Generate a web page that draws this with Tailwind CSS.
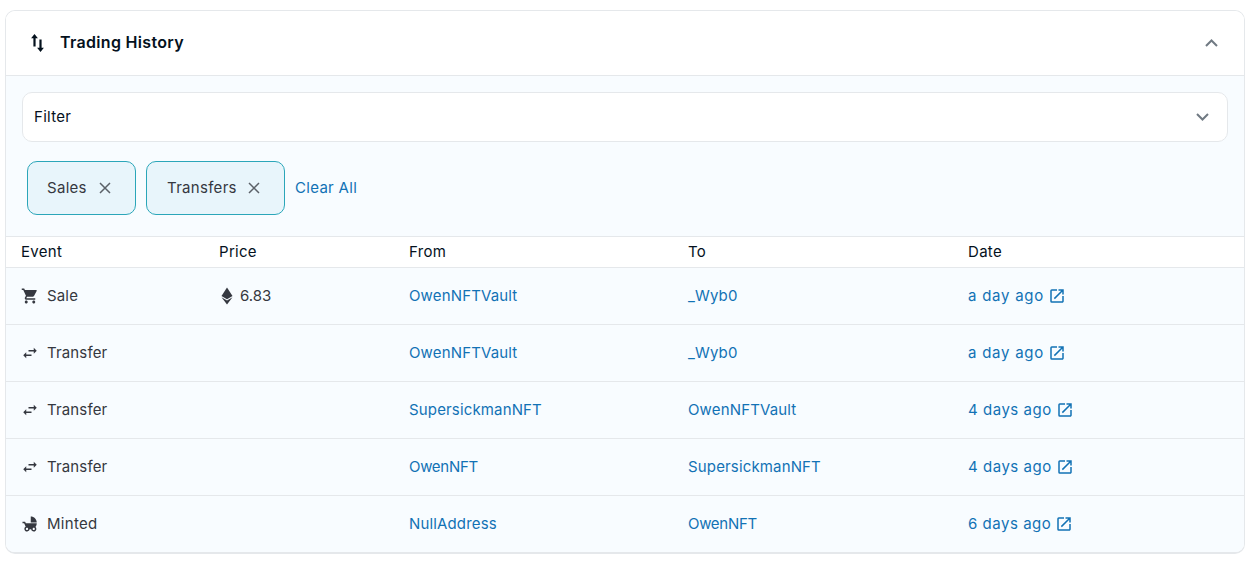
<!DOCTYPE html>
<html lang="en">
<head>
    <meta charset="UTF-8">
    <title>Trading History</title>
    <script src="https://cdn.jsdelivr.net/npm/@tailwindcss/browser@4"></script>
</head>
<body class="bg-white font-['Inter',sans-serif] text-[15px] text-[#353840] overflow-hidden">
    <div class="mx-[5px] mt-[10px] w-[1240px] rounded-[10px] border border-[#e5e8eb] border-b-2 overflow-hidden">
        <!-- header -->
        <div class="flex items-center justify-between h-[65px] pl-[23px] pr-[26px] border-b border-[#e5e8eb] bg-white">
            <div class="flex items-center gap-[13px]">
                <svg class="w-[18px] h-[20px]" viewBox="0 0 18 20" fill="#04111d">
                    <path d="M5.500 1l3.400 4.200H6.600v8.300H4.400V5.200H2.100z"/>
                    <path d="M11.500 19l-3.400-4.200h2.300V6.500h2.200v8.300h2.300z"/>
                </svg>
                <span class="mb-[2px] text-[16px] font-semibold text-[#04111d] tracking-[0.02em]">Trading History</span>
            </div>
            <svg class="w-[13px] h-[8px]" viewBox="0 0 13 8" fill="none" stroke="#707a83" stroke-width="2"><path d="M1 7l5.500-5.500L12 7"/></svg>
        </div>

        <div class="bg-[#f8fcff]">
            <!-- filter -->
            <div class="px-[16px] pt-[16px] pb-[19px]">
                <div class="flex items-center justify-between h-[50px] pl-[11px] pr-[18px] bg-white rounded-[10px] border border-[#e5e8eb]">
                    <span class="text-[#04111d] tracking-[0.02em]">Filter</span>
                    <svg class="w-[13px] h-[8px]" viewBox="0 0 13 8" fill="none" stroke="#707a83" stroke-width="2"><path d="M1 1l5.500 5.500L12 1"/></svg>
                </div>
            </div>

            <!-- chips -->
            <div class="flex items-center pl-[21px] pb-[21px]">
                <div class="flex items-center justify-between w-[109px] h-[54px] pl-[19px] pr-[24px] mr-[10px] rounded-[10px] border border-[#2ba6b9] bg-[#e8f5fb]">
                    <span class="tracking-[0.02em]">Sales</span>
                    <svg class="w-[12px] h-[12px]" viewBox="0 0 12 12" fill="none" stroke="#5b6168" stroke-width="1.500"><path d="M1 1l10 10M11 1L1 11"/></svg>
                </div>
                <div class="flex items-center justify-between w-[139px] h-[54px] pl-[20px] pr-[24px] mr-[10px] rounded-[10px] border border-[#2ba6b9] bg-[#e8f5fb]">
                    <span class="tracking-[0.02em]">Transfers</span>
                    <svg class="w-[12px] h-[12px]" viewBox="0 0 12 12" fill="none" stroke="#5b6168" stroke-width="1.500"><path d="M1 1l10 10M11 1L1 11"/></svg>
                </div>
                <span class="text-[#1272b5] tracking-[0.02em]">Clear All</span>
            </div>

            <!-- table -->
            <div class="grid grid-cols-[198px_190px_279px_280px_1fr] items-center h-[32px] pl-[15px] bg-white border-y border-[#e5e8eb] text-[#04111d] tracking-[0.02em]">
                <div>Event</div>
                <div>Price</div>
                <div>From</div>
                <div>To</div>
                <div>Date</div>
            </div>

            <div class="grid grid-cols-[198px_190px_279px_280px_1fr] items-center h-[57px] pl-[15px] border-b border-[#e5e8eb] tracking-[0.01em]">
                <div class="flex items-center gap-[8px]">
                    <svg class="w-[18px] h-[18px]" viewBox="0 0 24 24" fill="#353840"><path d="M7 18c-1.100 0-1.990.9-1.990 2S5.900 22 7 22s2-.9 2-2-.9-2-2-2zM1 2v2h2l3.600 7.590-1.350 2.450c-.16.28-.25.61-.25.96 0 1.100.9 2 2 2h12v-2H7.420c-.14 0-.25-.11-.25-.25l.03-.12.9-1.630h7.450c.75 0 1.410-.41 1.750-1.030l3.580-6.490A1 1 0 0 0 20 4H5.210l-.94-2H1zm16 16c-1.100 0-1.990.9-1.990 2s.89 2 1.990 2 2-.9 2-2-.9-2-2-2z"/></svg>
                    <span>Sale</span>
                </div>
                <div class="flex items-center gap-[6px] pl-[1px]">
                    <svg class="w-[14px] h-[18px]" viewBox="0 0 14 18"><path fill="#353840" d="M7 0.500L1.500 9 7 12.200 12.500 9z"/><path fill="#353840" d="M1.500 10.300L7 17.500l5.500-7.200L7 13.500z"/></svg>
                    <span class="tracking-normal">6.83</span>
                </div>
                <div class="text-[#1272b5]">OwenNFTVault</div>
                <div class="text-[#1272b5]">_Wyb0</div>
                <div class="flex items-center gap-[4px] text-[#1272b5]">
                    <span class="tracking-[0.05em]">a day ago</span>
                    <svg class="w-[18px] h-[18px]" viewBox="0 0 24 24" fill="#1272b5"><path d="M19 19H5V5h7V3H5a2 2 0 0 0-2 2v14a2 2 0 0 0 2 2h14c1.100 0 2-.9 2-2v-7h-2v7zM14 3v2h3.590l-9.830 9.830 1.410 1.410L19 6.410V10h2V3h-7z"/></svg>
                </div>
            </div>

            <div class="grid grid-cols-[198px_190px_279px_280px_1fr] items-center h-[57px] pl-[15px] border-b border-[#e5e8eb] tracking-[0.01em]">
                <div class="flex items-center gap-[8px]">
                    <svg class="w-[18px] h-[18px]" viewBox="0 0 24 24" fill="#353840"><path d="M6.990 11L3 15l3.990 4v-3H14v-2H6.990v-3zM21 9l-3.990-4v3H10v2h7.010v3L21 9z"/></svg>
                    <span>Transfer</span>
                </div>
                <div></div>
                <div class="text-[#1272b5]">OwenNFTVault</div>
                <div class="text-[#1272b5]">_Wyb0</div>
                <div class="flex items-center gap-[4px] text-[#1272b5]">
                    <span class="tracking-[0.05em]">a day ago</span>
                    <svg class="w-[18px] h-[18px]" viewBox="0 0 24 24" fill="#1272b5"><path d="M19 19H5V5h7V3H5a2 2 0 0 0-2 2v14a2 2 0 0 0 2 2h14c1.100 0 2-.9 2-2v-7h-2v7zM14 3v2h3.590l-9.830 9.830 1.410 1.410L19 6.410V10h2V3h-7z"/></svg>
                </div>
            </div>

            <div class="grid grid-cols-[198px_190px_279px_280px_1fr] items-center h-[57px] pl-[15px] border-b border-[#e5e8eb] tracking-[0.01em]">
                <div class="flex items-center gap-[8px]">
                    <svg class="w-[18px] h-[18px]" viewBox="0 0 24 24" fill="#353840"><path d="M6.990 11L3 15l3.990 4v-3H14v-2H6.990v-3zM21 9l-3.990-4v3H10v2h7.010v3L21 9z"/></svg>
                    <span>Transfer</span>
                </div>
                <div></div>
                <div class="text-[#1272b5]">SupersickmanNFT</div>
                <div class="text-[#1272b5]">OwenNFTVault</div>
                <div class="flex items-center gap-[4px] text-[#1272b5]">
                    <span class="tracking-[0.035em]">4 days ago</span>
                    <svg class="w-[18px] h-[18px]" viewBox="0 0 24 24" fill="#1272b5"><path d="M19 19H5V5h7V3H5a2 2 0 0 0-2 2v14a2 2 0 0 0 2 2h14c1.100 0 2-.9 2-2v-7h-2v7zM14 3v2h3.590l-9.830 9.830 1.410 1.410L19 6.410V10h2V3h-7z"/></svg>
                </div>
            </div>

            <div class="grid grid-cols-[198px_190px_279px_280px_1fr] items-center h-[57px] pl-[15px] border-b border-[#e5e8eb] tracking-[0.01em]">
                <div class="flex items-center gap-[8px]">
                    <svg class="w-[18px] h-[18px]" viewBox="0 0 24 24" fill="#353840"><path d="M6.990 11L3 15l3.990 4v-3H14v-2H6.990v-3zM21 9l-3.990-4v3H10v2h7.010v3L21 9z"/></svg>
                    <span>Transfer</span>
                </div>
                <div></div>
                <div class="text-[#1272b5] tracking-[-0.02em]">OwenNFT</div>
                <div class="text-[#1272b5]">SupersickmanNFT</div>
                <div class="flex items-center gap-[4px] text-[#1272b5]">
                    <span class="tracking-[0.035em]">4 days ago</span>
                    <svg class="w-[18px] h-[18px]" viewBox="0 0 24 24" fill="#1272b5"><path d="M19 19H5V5h7V3H5a2 2 0 0 0-2 2v14a2 2 0 0 0 2 2h14c1.100 0 2-.9 2-2v-7h-2v7zM14 3v2h3.590l-9.830 9.830 1.410 1.410L19 6.410V10h2V3h-7z"/></svg>
                </div>
            </div>

            <div class="grid grid-cols-[198px_190px_279px_280px_1fr] items-center h-[56px] pl-[15px] tracking-[0.01em]">
                <div class="flex items-center gap-[8px]">
                    <svg class="w-[18px] h-[18px]" viewBox="0 0 24 24" fill="#353840"><path d="M13 2v8h8c0-4.420-3.580-8-8-8zm6.320 13.890C20.370 14.540 21 12.840 21 11H6.440l-.95-2H2v2h2.220s1.890 4.070 2.120 4.420c-1.100.59-1.840 1.750-1.840 3.080C4.500 20.430 6.070 22 8 22c1.760 0 3.220-1.300 3.460-3h2.080c.24 1.700 1.700 3 3.460 3 1.930 0 3.500-1.570 3.500-3.500 0-1.040-.46-1.970-1.180-2.610zM8 20c-.83 0-1.500-.67-1.500-1.500S7.170 17 8 17s1.500.67 1.500 1.500S8.830 20 8 20zm9 0c-.83 0-1.500-.67-1.500-1.500S16.170 17 17 17s1.500.67 1.500 1.500S17.830 20 17 20z"/></svg>
                    <span class="tracking-[0.02em]">Minted</span>
                </div>
                <div></div>
                <div class="text-[#1272b5]">NullAddress</div>
                <div class="text-[#1272b5] tracking-[-0.02em]">OwenNFT</div>
                <div class="flex items-center gap-[4px] text-[#1272b5]">
                    <span class="tracking-[0.035em]">6 days ago</span>
                    <svg class="w-[18px] h-[18px]" viewBox="0 0 24 24" fill="#1272b5"><path d="M19 19H5V5h7V3H5a2 2 0 0 0-2 2v14a2 2 0 0 0 2 2h14c1.100 0 2-.9 2-2v-7h-2v7zM14 3v2h3.590l-9.830 9.830 1.410 1.410L19 6.410V10h2V3h-7z"/></svg>
                </div>
            </div>
        </div>
    </div>
</body>
</html>
